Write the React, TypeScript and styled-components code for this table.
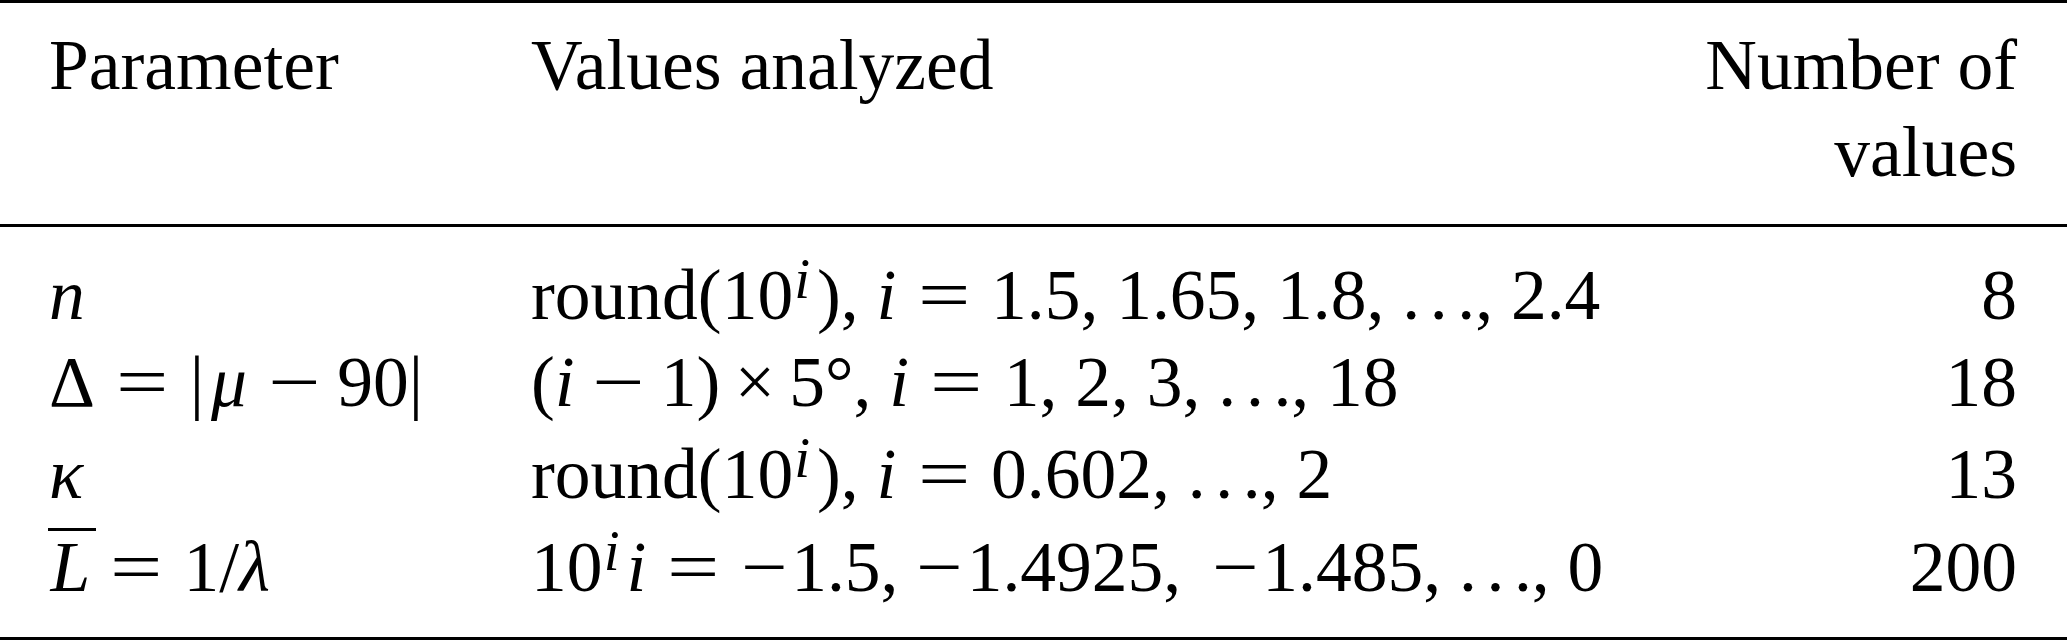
import { FC, ReactNode } from 'react'
import styled, { createGlobalStyle } from 'styled-components'

const Global = createGlobalStyle`
  html, body {
    margin: 0;
    padding: 0;
    background: #fff;
  }
`

type Row = {
  param: ReactNode
  values: ReactNode
  count: number
  top: number
}

type OpKind = 'rel' | 'bin' | 'unary' | 'plain'

const Page = styled.div`
  width: 2067px;
  height: 643px;
  background: #fff;
`

const Table = styled.table`
  width: 100%;
  border-collapse: collapse;
  table-layout: fixed;
  font-family: 'Liberation Serif', 'Times New Roman', serif;
  font-size: 71.5px;
  color: #000;
  border-top: 3px solid #000;
  border-bottom: 3px solid #000;
`

const Head = styled.thead`
  border-bottom: 3px solid #000;
`

const HeadCell = styled.th<{ $align?: 'left' | 'right' }>`
  font-weight: normal;
  text-align: ${(p) => p.$align || 'left'};
  vertical-align: top;
  line-height: 87px;
  padding: 18px 0 29px;
  white-space: nowrap;

  &:first-child {
    padding-left: 49px;
  }
  &:last-child {
    padding-right: 50px;
  }
`

const Cell = styled.td<{ $top: number; $bottom: number; $align?: 'left' | 'right' }>`
  text-align: ${(p) => p.$align || 'left'};
  vertical-align: top;
  line-height: 87px;
  padding: ${(p) => p.$top}px 0 ${(p) => p.$bottom}px;
  white-space: nowrap;

  &:first-child {
    padding-left: 49px;
  }
  &:last-child {
    padding-right: 50px;
  }
`

const Var = styled.i<{ $wide?: boolean }>`
  font-style: italic;
  margin: ${(p) => (p.$wide ? '0 0.06em 0 0.1em' : '0')};
`

const opMargin: Record<OpKind, string> = {
  rel: '0 0.38em',
  bin: '0 0.32em',
  unary: '0 0.1em 0 0.04em',
  plain: '0 0.2em',
}

const opScale: Record<OpKind, number> = {
  rel: 1.3,
  bin: 1.3,
  unary: 1.15,
  plain: 1,
}

// the Times "=" and "−" are narrower than the TeX ones, so stretch them a bit
const Op = styled.span<{ $kind: OpKind; $lead?: boolean }>`
  display: inline-block;
  transform: scaleX(${(p) => opScale[p.$kind]});
  margin: ${(p) => opMargin[p.$kind]};
  ${(p) => p.$lead && 'margin-left: 0.22em;'}
`

const Sup = styled.sup`
  font-size: 0.8em;
  font-style: italic;
  line-height: 0;
  vertical-align: 0.37em;
  margin: 0 0.12em 0 0.02em;
`

const Dots = styled.span`
  letter-spacing: 0.135em;
  margin-right: -0.135em;
`

const Bar = styled.span`
  display: inline-block;
  line-height: 1;
  border-top: 3px solid #000;
  padding: 0 0.08em 0 0.04em;
  margin: 0 -0.1em 0 -0.02em;
  font-style: italic;
`

const Ten: FC = () => (
  <>
    10<Sup>i</Sup>
  </>
)

const Ellipsis: FC = () => <Dots>...</Dots>

const rows: Row[] = [
  {
    param: <Var>n</Var>,
    values: (
      <>
        round(<Ten />), <Var>i</Var>
        <Op $kind='rel'>=</Op>1.5, 1.65, 1.8, <Ellipsis />, 2.4
      </>
    ),
    count: 8,
    top: 24,
  },
  {
    param: (
      <>
        Δ<Op $kind='rel'>=</Op>|<Var $wide>μ</Var>
        <Op $kind='bin'>−</Op>90|
      </>
    ),
    values: (
      <>
        (<Var>i</Var>
        <Op $kind='bin'>−</Op>1)<Op $kind='plain'>×</Op>5°, <Var>i</Var>
        <Op $kind='rel'>=</Op>1, 2, 3, <Ellipsis />, 18
      </>
    ),
    count: 18,
    top: 0,
  },
  {
    param: <Var>κ</Var>,
    values: (
      <>
        round(<Ten />), <Var>i</Var>
        <Op $kind='rel'>=</Op>0.602, <Ellipsis />, 2
      </>
    ),
    count: 13,
    top: 5,
  },
  {
    param: (
      <>
        <Bar>L</Bar>
        <Op $kind='rel'>=</Op>1/<Var>λ</Var>
      </>
    ),
    values: (
      <>
        <Ten />
        <Var>i</Var>
        <Op $kind='rel'>=</Op>
        <Op $kind='unary'>−</Op>1.5, <Op $kind='unary'>−</Op>1.4925,{' '}
        <Op $kind='unary' $lead>−</Op>1.485, <Ellipsis />, 0
      </>
    ),
    count: 200,
    top: 6,
  },
]

const App: FC = () => {
  return (
    <Page>
      <Global />
      <Table>
        <colgroup>
          <col style={{ width: 531 }} />
          <col />
          <col style={{ width: 420 }} />
        </colgroup>
        <Head>
          <tr>
            <HeadCell>Parameter</HeadCell>
            <HeadCell>Values analyzed</HeadCell>
            <HeadCell $align='right'>
              Number of
              <br />
              values
            </HeadCell>
          </tr>
        </Head>
        <tbody>
          {rows.map((r, i) => {
            const bottom = i === rows.length - 1 ? 27 : 0
            return (
              <tr key={i}>
                <Cell $top={r.top} $bottom={bottom}>{r.param}</Cell>
                <Cell $top={r.top} $bottom={bottom}>{r.values}</Cell>
                <Cell $top={r.top} $bottom={bottom} $align='right'>{r.count}</Cell>
              </tr>
            )
          })}
        </tbody>
      </Table>
    </Page>
  )
}

export default App
